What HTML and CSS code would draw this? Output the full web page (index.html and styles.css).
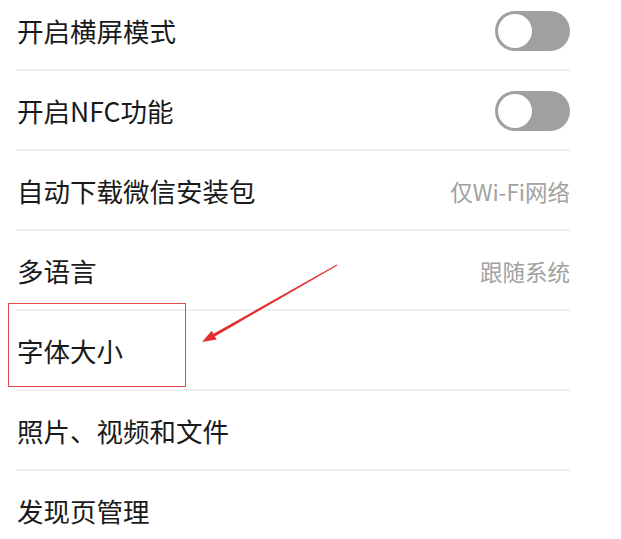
FILE: index.html
```html
<!DOCTYPE html>
<html lang="zh-CN">
<head>
<meta charset="utf-8">
<link rel="stylesheet" href="styles.css">
</head>
<body>
<div class="screen">
  <ul class="list">
    <li class="row"><span class="label">开启横屏模式</span><span class="toggle"><span class="knob"></span></span></li>
    <li class="row"><span class="label">开启NFC功能</span><span class="toggle"><span class="knob"></span></span></li>
    <li class="row"><span class="label">自动下载微信安装包</span><span class="value">仅Wi-Fi网络</span></li>
    <li class="row"><span class="label">多语言</span><span class="value">跟随系统</span></li>
    <li class="row"><span class="label">字体大小</span></li>
    <li class="row"><span class="label">照片、视频和文件</span></li>
    <li class="row"><span class="label">发现页管理</span></li>
  </ul>
  <div class="mark-box"></div>
  <svg class="mark-arrow" width="150" height="92" viewBox="0 0 150 92">
    <polygon points="141.75,6.57 18.5,75.8 16.7,72.8 7,84 21.7,81.4 19.9,78.4 142.25,7.43" fill="#e3302f"/>
  </svg>
</div>
</body>
</html>
```

FILE: styles.css
```css
* { box-sizing: border-box; }
html, body { margin: 0; padding: 0; background: #ffffff; }
body {
  font-family: "Noto Sans CJK SC", "Noto Sans", sans-serif;
  color: #1a1a1a;
}
.screen {
  position: relative;
  width: 621px;
  height: 539px;
  overflow: hidden;
}
.list {
  list-style: none;
  margin: -9px 0 0 0;
  padding: 0 51px 0 16px;
}
.row {
  height: 80px;
  display: flex;
  align-items: center;
  justify-content: space-between;
  border-bottom: 2px solid #efefef;
  padding-top: 2px;
}
.label {
  font-size: 26.5px;
  line-height: 1;
  padding-left: 1px;
}
.value {
  font-size: 22.5px;
  line-height: 1;
  color: #a2a2a2;
}
.toggle {
  width: 75px;
  height: 40px;
  border-radius: 20px;
  background: #a0a0a0;
  padding: 3px;
  display: flex;
  align-items: center;
}
.knob {
  width: 34px;
  height: 34px;
  border-radius: 50%;
  background: #ffffff;
}
.mark-box {
  position: absolute;
  left: 8px;
  top: 303px;
  width: 178px;
  height: 84px;
  border: 1.5px solid #e2484c;
}
.mark-arrow {
  position: absolute;
  left: 195px;
  top: 258px;
}
```
